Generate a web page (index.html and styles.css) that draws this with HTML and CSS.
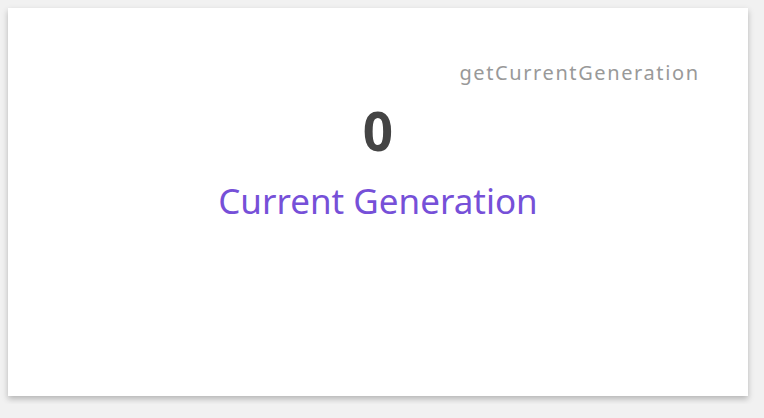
FILE: index.html
```html
<!DOCTYPE html>
<html>
<head>
<meta charset="utf-8">
<link rel="stylesheet" href="styles.css">
</head>
<body>
<div class="card">
  <div class="method">getCurrentGeneration</div>
  <div class="value">0</div>
  <div class="title">Current Generation</div>
</div>
</body>
</html>
```
FILE: styles.css
```css
html, body {
  margin: 0;
  padding: 0;
  background: #f1f1f1;
}
body {
  padding: 8px;
  font-family: "Noto Sans", Roboto, sans-serif;
}
.card {
  width: 740px;
  height: 388px;
  box-sizing: border-box;
  background: #fff;
  box-shadow: 0 3px 6px rgba(0, 0, 0, 0.25);
  padding: 53px 50px 0 50px;
  display: flex;
  flex-direction: column;
}
.method {
  align-self: flex-end;
  font-size: 20px;
  line-height: 24px;
  letter-spacing: 1.6px;
  margin-right: -1.6px;
  color: #999;
}
.value {
  align-self: center;
  margin-top: 18px;
  font-size: 53px;
  line-height: 56px;
  font-weight: 700;
  color: #444;
}
.title {
  align-self: center;
  margin-top: 21px;
  font-size: 35px;
  line-height: 42px;
  color: #7650d8;
}
```
